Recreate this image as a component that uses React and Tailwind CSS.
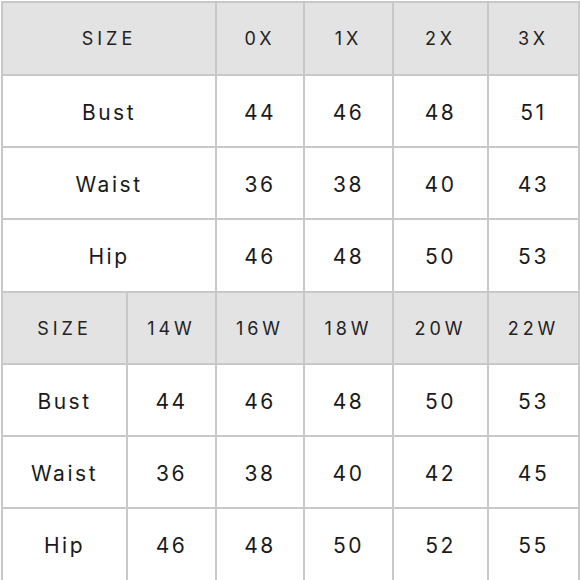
import React from 'react';

const top = {
    cols: 'grid-cols-[212px_86px_87px_93px_89px]',
    head: ['SIZE', '0X', '1X', '2X', '3X'],
    rows: [
        { h: 'h-[70px]', cells: ['Bust', '44', '46', '48', '51'] },
        { h: 'h-[70px]', cells: ['Waist', '36', '38', '40', '43'] },
        { h: 'h-[71px]', cells: ['Hip', '46', '48', '50', '53'] },
    ],
};

const bottom = {
    cols: 'grid-cols-[123px_87px_86px_87px_93px_89px]',
    head: ['SIZE', '14W', '16W', '18W', '20W', '22W'],
    rows: [
        { h: 'h-[70px]', cells: ['Bust', '44', '46', '48', '50', '53'] },
        { h: 'h-[70px]', cells: ['Waist', '36', '38', '40', '42', '45'] },
        { h: 'h-[71px]', cells: ['Hip', '46', '48', '50', '52', '55'] },
    ],
};

const HeadRow = ({ cols, labels, h }) => (
    <div className={`grid ${cols} gap-[2px]`}>
        {labels.map((label, i) => (
            <div
                key={i}
                className={`${h} bg-[#e3e3e3] flex items-center justify-center text-[18px] tracking-[0.22em] text-[#222]`}
            >
                {label}
            </div>
        ))}
    </div>
);

const BodyRow = ({ cols, cells, h }) => (
    <div className={`grid ${cols} gap-[2px]`}>
        {cells.map((c, i) => (
            <div
                key={i}
                className={`${h} bg-white flex items-center justify-center text-[21px] tracking-[0.12em] pt-[3px] text-[#1a1a1a]`}
            >
                {c}
            </div>
        ))}
    </div>
);

const App = () => {
    return (
        <div className="w-[580px] h-[580px] bg-white overflow-hidden pt-[1px] pl-[1px] font-['Inter','Liberation_Sans',sans-serif]">
            <div className="w-[579px] h-[579px] bg-[#c8c8c8] pt-[2px] px-[2px] flex flex-col gap-[2px]">
                <HeadRow cols={top.cols} labels={top.head} h="h-[71px]" />
                {top.rows.map((r, i) => (
                    <BodyRow key={i} cols={top.cols} cells={r.cells} h={r.h} />
                ))}
                <HeadRow cols={bottom.cols} labels={bottom.head} h="h-[70px]" />
                {bottom.rows.map((r, i) => (
                    <BodyRow key={i} cols={bottom.cols} cells={r.cells} h={r.h} />
                ))}
            </div>
        </div>
    );
};

export default App;
